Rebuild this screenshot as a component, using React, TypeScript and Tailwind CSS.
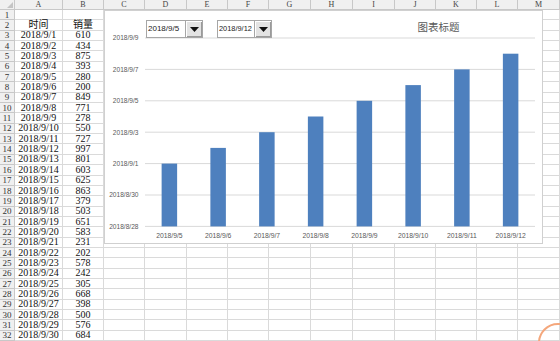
import React from "react";

const data: [string, string][] = [
  ["", ""],
  ["时间", "销量"],
  ["2018/9/1", "610"],
  ["2018/9/2", "434"],
  ["2018/9/3", "875"],
  ["2018/9/4", "393"],
  ["2018/9/5", "280"],
  ["2018/9/6", "200"],
  ["2018/9/7", "849"],
  ["2018/9/8", "771"],
  ["2018/9/9", "278"],
  ["2018/9/10", "550"],
  ["2018/9/11", "727"],
  ["2018/9/12", "997"],
  ["2018/9/13", "801"],
  ["2018/9/14", "603"],
  ["2018/9/15", "625"],
  ["2018/9/16", "863"],
  ["2018/9/17", "379"],
  ["2018/9/18", "503"],
  ["2018/9/19", "651"],
  ["2018/9/20", "583"],
  ["2018/9/21", "231"],
  ["2018/9/22", "202"],
  ["2018/9/23", "578"],
  ["2018/9/24", "242"],
  ["2018/9/25", "305"],
  ["2018/9/26", "668"],
  ["2018/9/27", "398"],
  ["2018/9/28", "500"],
  ["2018/9/29", "576"],
  ["2018/9/30", "684"],
];

const letters = ["A", "B", "C", "D", "E", "F", "G", "H", "I", "J", "K", "L", "M"];
const emptyCols = ["C", "D", "E", "F", "G", "H", "I", "J", "K", "L", "M"];

const yLabels = ["2018/9/9", "2018/9/7", "2018/9/5", "2018/9/3", "2018/9/1", "2018/8/30", "2018/8/28"];
const xLabels = ["2018/9/5", "2018/9/6", "2018/9/7", "2018/9/8", "2018/9/9", "2018/9/10", "2018/9/11", "2018/9/12"];

function Dropdown({ text, wide }: { text: string; wide: boolean }) {
  return (
    <div
      className={
        "absolute top-[9px] h-[18px] flex border border-[#a6a6a6] bg-white " +
        (wide ? "left-[41px] w-[57px]" : "left-[112px] w-[55px]")
      }
    >
      <div
        className={
          "flex-1 overflow-hidden whitespace-nowrap pl-[1px] leading-[16px] text-[#222] font-['Liberation_Sans',sans-serif] " +
          (wide ? "text-[8px]" : "text-[7.4px]")
        }
      >
        {text}
      </div>
      <div className="w-[17px] h-full flex items-center justify-center bg-[#e3e3e3] border-l border-[#a6a6a6] shadow-[inset_1px_1px_0_#ffffff,inset_-1px_-1px_0_#9a9a9a]">
        <svg width="9" height="5" viewBox="0 0 9 5">
          <path d="M0 0 L9 0 L4.5 5 Z" fill="#111" />
        </svg>
      </div>
    </div>
  );
}

function Chart() {
  const gridTop = 27;
  const step = 31.4;
  const plotL = 40;
  const plotR = 430;
  const cat = (plotR - plotL) / 8;
  const base = gridTop + step * 6;
  return (
    <div className="absolute left-[104px] top-[10px] w-[439px] h-[234px] bg-white border border-[#d0d0d0]">
      <svg className="absolute inset-0" width="437" height="232" viewBox="0 0 437 232">
        <text
          x="333.5"
          y="20"
          textAnchor="middle"
          fontSize="10.5"
          fill="#595959"
          fontFamily="'Noto Sans CJK SC', sans-serif"
        >
          图表标题
        </text>
        {yLabels.map((l, i) => {
          const y = gridTop + step * i;
          return (
            <g key={l}>
              <line x1={plotL} x2={plotR} y1={y} y2={y} stroke="#d9d9d9" strokeWidth="1" />
              <text
                x="33.5"
                y={y + 2.4}
                textAnchor="end"
                fontSize="6.6"
                fill="#595959"
                fontFamily="'Liberation Sans', sans-serif"
              >
                {l}
              </text>
            </g>
          );
        })}
        {xLabels.map((l, i) => {
          const cx = plotL + cat * (i + 0.5);
          const top = base - step * 2 - i * 15.7;
          return (
            <g key={l}>
              <rect x={cx - 7.75} y={top} width="15.5" height={base - top} fill="#4e80be" />
              <text
                x={cx}
                y="226.5"
                textAnchor="middle"
                fontSize="6.8"
                fill="#595959"
                fontFamily="'Liberation Sans', sans-serif"
              >
                {l}
              </text>
            </g>
          );
        })}
      </svg>
      <Dropdown text="2018/9/5" wide={true} />
      <Dropdown text="2018/9/12" wide={false} />
    </div>
  );
}

export default function App() {
  return (
    <div className="relative w-[560px] h-[341px] overflow-hidden bg-white font-['Liberation_Serif','Noto_Sans_CJK_SC',serif] text-black">
      <div className="grid grid-cols-[15px_48px_41px_41px_42px_41px_41px_42px_42px_42px_41px_41px_41px_42px] grid-rows-[10px_repeat(32,10.35px)]">
        <div className="relative bg-[#f0f0f0] border-r border-b border-[#c8c8c8]">
          <svg className="absolute right-[1px] bottom-[1px]" width="6" height="6" viewBox="0 0 6 6">
            <path d="M6 0 L6 6 L0 6 Z" fill="#c4c4c4" />
          </svg>
        </div>
        {letters.map((l) => (
          <div
            key={l}
            className="bg-[#f0f0f0] border-r border-b border-[#c8c8c8] flex items-center justify-center text-[8px] leading-[10px] text-[#444]"
          >
            {l}
          </div>
        ))}
        {data.map((r, i) => (
          <React.Fragment key={i}>
            <div className="bg-[#f0f0f0] border-r border-b border-[#c8c8c8] flex items-center justify-center text-[9px] leading-[10px] text-[#333]">
              {i + 1}
            </div>
            <div className="border-r border-b border-[#dadada] flex items-center justify-center text-[10px] leading-[10px] whitespace-nowrap text-[#111]">
              {r[0]}
            </div>
            <div className="border-r border-b border-[#dadada] flex items-center justify-center text-[10px] leading-[10px] whitespace-nowrap text-[#111]">
              {r[1]}
            </div>
            {emptyCols.map((c) => (
              <div key={c} className="border-r border-b border-[#dadada]" />
            ))}
          </React.Fragment>
        ))}
      </div>
      <Chart />
      <svg className="absolute left-[536px] top-[320px]" width="24" height="21" viewBox="0 0 24 21">
        <circle cx="22" cy="23" r="19" fill="none" stroke="#f4a77c" strokeWidth="2" />
      </svg>
    </div>
  );
}
